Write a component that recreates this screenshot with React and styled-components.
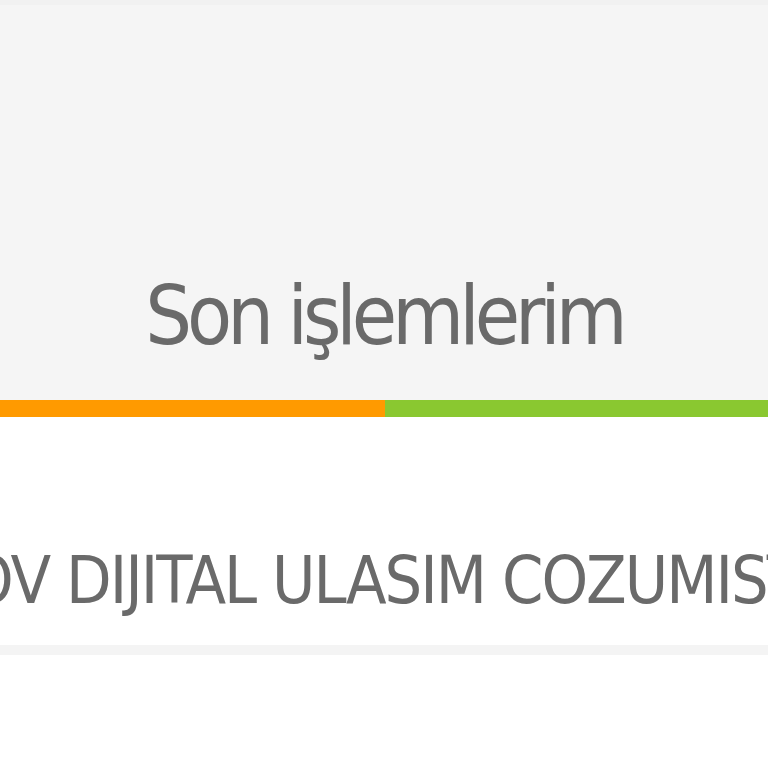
import React from "react";
import styled, { createGlobalStyle } from "styled-components";

const Global = createGlobalStyle`
  html, body { margin: 0; padding: 0; background: #ffffff; }
  body { font-family: "DejaVu Sans Condensed", "DejaVu Sans", sans-serif; font-stretch: condensed; }
`;

const Page = styled.div`
  display: flex;
  flex-direction: column;
  width: 768px;
  height: 768px;
  overflow: hidden;
  background: #ffffff;
`;

const Header = styled.header`
  height: 400px;
  box-sizing: border-box;
  background: #f5f5f5;
  border-top: 5px solid #f1f1f1;
  display: flex;
  align-items: flex-end;
  justify-content: center;
  padding-bottom: 43px;
`;

const Title = styled.h1`
  margin: 0;
  font-family: "DejaVu Sans Condensed", "DejaVu Sans", sans-serif;
  font-stretch: condensed;
  font-weight: 400;
  font-size: 82px;
  line-height: 1;
  color: #6a6a6a;
  letter-spacing: -5px;
`;

const Bar = styled.div`
  display: grid;
  grid-template-columns: 385px 1fr;
  height: 17px;
`;

const Segment = styled.div`
  background: ${(p) => p.$color};
`;

const Content = styled.section`
  height: 228px;
  box-sizing: border-box;
  padding-top: 131px;
  display: flex;
  justify-content: center;
  align-items: flex-start;
  overflow: hidden;
  background: #ffffff;
`;

const Marquee = styled.div`
  flex: none;
  white-space: nowrap;
  font-family: "DejaVu Sans Condensed", "DejaVu Sans", sans-serif;
  font-stretch: condensed;
  font-size: 66px;
  line-height: 1;
  color: #6a6a6a;
  letter-spacing: -2px;
`;

const Divider = styled.div`
  height: 10px;
  background: #f4f4f4;
`;

const Rest = styled.div`
  flex: 1;
  background: #ffffff;
`;

export default function App() {
  return (
    <Page>
      <Global />
      <Header>
        <Title>Son işlemlerim</Title>
      </Header>
      <Bar>
        <Segment $color="#ff9a00" />
        <Segment $color="#8ac830" />
      </Bar>
      <Content>
        <Marquee>OV DIJITAL ULASIM COZUMIST</Marquee>
      </Content>
      <Divider />
      <Rest />
    </Page>
  );
}
